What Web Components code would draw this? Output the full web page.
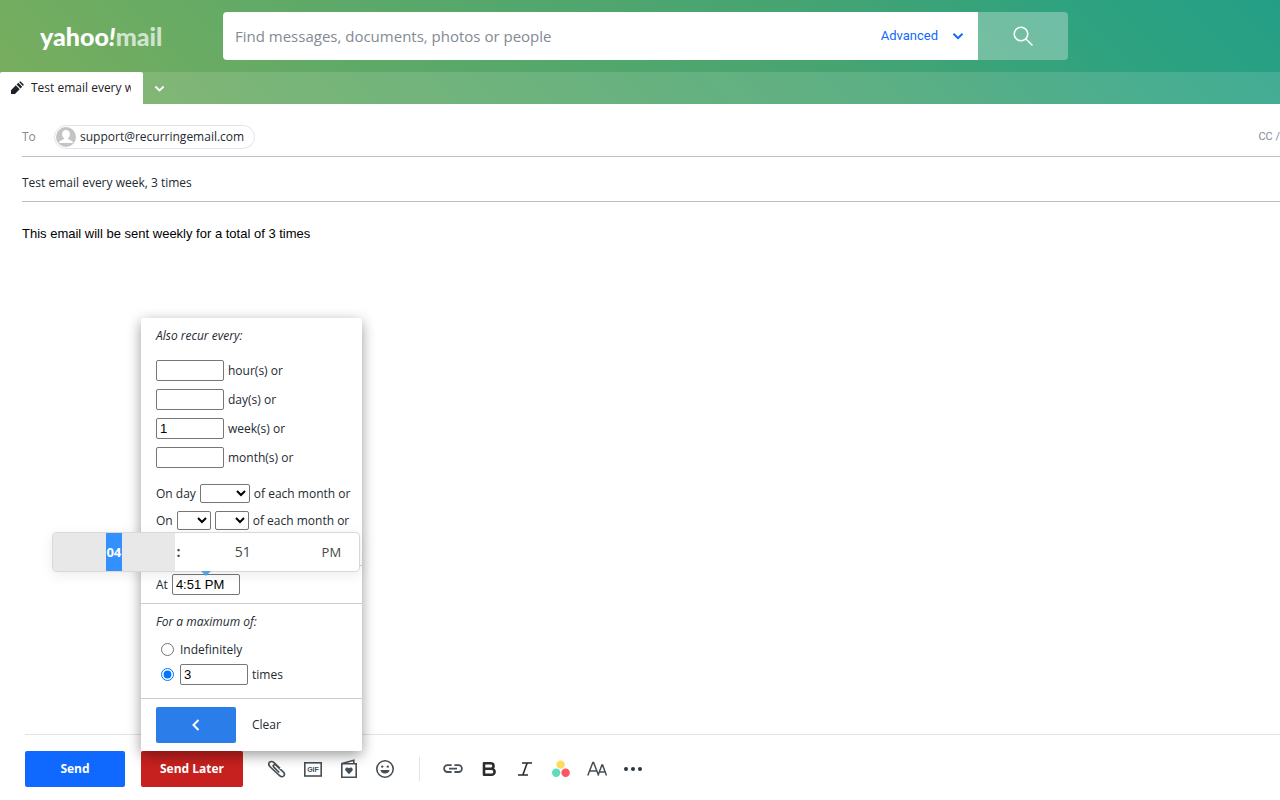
<!DOCTYPE html>
<html lang="en">
<head>
<meta charset="utf-8">
<title>Yahoo Mail</title>
<style>
  body {
    margin: 0;
    background: #fff;
    color: #232a31;
    font: 12px/20px "Open Sans", "Noto Sans", sans-serif;
  }
</style>
</head>
<body>
<mail-app></mail-app>

<script>
// ================================================
// Constants
// ================================================
const BASE_CSS = `
  *, *::before, *::after { box-sizing: border-box; }
  button, input, select { font: inherit; color: inherit; margin: 0; }
  button { border: 0; padding: 0; background: none; cursor: pointer; }
  a { color: inherit; text-decoration: none; }
  .field {
    height: 21px;
    width: 68px;
    padding: 0 3px;
    border: 1px solid #767676;
    border-radius: 2px;
    background: #fff;
    color: #000;
    font: 13px/16px "Liberation Sans", Arial, sans-serif;
  }
`;

// [viewBox, markup]
const ICONS = {
  pen: ['0 0 14 14', '<path fill="#1d2228" d="M1 13V9.200L5.800 4.300l3.900 3.900L5 13zM6.600 3.500L8.300 1.800l3.900 3.900-1.700 1.700zM9.100 1.100l.7-.7q.4-.4.8 0l3 3q.4.400 0 .8l-.7.7z"/>'],
  down: ['0 0 12 12', '<path fill="none" stroke="currentColor" stroke-width="2" d="M1.500 3.800L6 8.200l4.500-4.400"/>'],
  back: ['0 0 12 12', '<path fill="none" stroke="currentColor" stroke-width="2" d="M8.500 1L3.500 6l5 5"/>'],
  search: ['0 0 20 20', '<g fill="none" stroke="currentColor" stroke-width="1.600" stroke-linecap="round"><circle cx="8" cy="8" r="6.800"/><path d="M13 13l6 6"/></g>'],
  avatar: ['0 0 20 20', '<circle cx="10" cy="10" r="10" fill="#c4c4c4"/><path fill="#fff" d="M10 3c2.600 0 3.900 1.700 3.900 4 0 2-.8 3.300-1.800 4.100v1c0 .8 4.700 1.100 4.900 4H3c.2-2.900 4.900-3.200 4.900-4v-1C6.900 10.300 6.100 9 6.100 7c0-2.300 1.300-4 3.900-4z"/>'],
  clip: ['0 0 20 20', '<path fill="none" stroke="#464e56" stroke-width="1.600" d="M12.300 13.500L6.800 8.200C5.300 6.800 7.200 4.600 8.900 6.100l7.300 6.800c3 2.900-.5 6.700-3.600 3.800L3.300 8C-.2 4.600 3.300.5 7 3.700l6 5.700"/>'],
  gif: ['0 0 20 20', '<rect x="1.800" y="3.800" width="16.400" height="13.200" fill="none" stroke="#464e56" stroke-width="1.600"/><text x="10" y="13" text-anchor="middle" font-family="Liberation Sans, Arial, sans-serif" font-weight="700" font-size="7" fill="#464e56">GIF</text>'],
  card: ['0 0 20 20', '<path fill="none" stroke="#464e56" stroke-width="1.600" d="M2.800 4.800h14.400v13.400H2.800zM3 4.500L14.800 1.200v3.300"/><path fill="#464e56" d="M10 15.200L6.700 11.800C5 9.900 7.900 6.900 10 9.300c2.100-2.400 5 .6 3.300 2.500z"/>'],
  smile: ['0 0 20 20', '<circle cx="10" cy="10" r="8.200" fill="none" stroke="#464e56" stroke-width="1.600"/><circle cx="7.200" cy="7.600" r="1.200" fill="#464e56"/><circle cx="12.800" cy="7.600" r="1.200" fill="#464e56"/><path fill="#464e56" d="M5.500 11h9c-.4 4.800-8.600 4.800-9 0z"/>'],
  link: ['0 0 20 20', '<path fill="none" stroke="#464e56" stroke-width="1.800" d="M8.600 13H4.500a3.400 3.400 0 010-6.800h4.100M11.400 6.200h4.100a3.400 3.400 0 010 6.800h-4.100M6 9.600h8"/>'],
  bold: ['0 0 20 20', '<path fill="none" stroke="#2c2c2c" stroke-width="2.600" stroke-linejoin="round" d="M5 4.200h6.700a2.700 2.700 0 010 5.600H5zM5 9.800h7.600a3 3 0 010 6H5z"/>'],
  italic: ['0 0 20 20', '<path fill="none" stroke="#2c2c2c" stroke-width="1.600" d="M7 4h10M3 16h10M12.200 4L7.800 16"/>'],
  colors: ['0 0 20 20', '<circle cx="9.600" cy="5.600" r="4.200" fill="#ffdb5c"/><circle cx="5.200" cy="13.800" r="4.200" fill="#5edcc0"/><circle cx="14.600" cy="13.800" r="4.200" fill="#ff5561"/>'],
  font: ['0 0 20 20', '<path fill="none" stroke="#464e56" stroke-width="1.500" d="M.8 16.500L5.800 3.500h.8l5 13M2.600 12h7.200M11 16.500L14.900 6h.7l3.900 10.500M12.500 13h5.500"/>'],
  more: ['0 0 20 20', '<g fill="#2c363f"><circle cx="3" cy="10" r="2"/><circle cx="10" cy="10" r="2"/><circle cx="17" cy="10" r="2"/></g>'],
};


function define(name, css, html) {
  customElements.define(name, class extends HTMLElement {
    constructor() {
      super();
      this.attachShadow({ mode: 'open' }).innerHTML = `<style>${BASE_CSS}${css}</style>${html}`;
    }
  });
}


// ================================================
// Icon
// ================================================
class MailIcon extends HTMLElement {
  constructor() {
    super();
    this.attachShadow({ mode: 'open' });
  }

  connectedCallback() {
    const [viewBox, markup] = ICONS[this.getAttribute('name')];
    const size = this.getAttribute('size') || 20;
    this.shadowRoot.innerHTML = `
      <style>:host { display: inline-flex; flex: none; } svg { display: block; }</style>
      <svg width="${size}" height="${size}" viewBox="${viewBox}" aria-hidden="true">${markup}</svg>`;
  }
}
customElements.define('mail-icon', MailIcon);


// ================================================
// Header
// ================================================
define('mail-search', `
  :host { display: block; flex: 0 1 845px; }
  form { display: flex; height: 48px; border-radius: 4px; overflow: hidden; }
  input {
    flex: 1;
    min-width: 0;
    padding: 0 12px;
    border: 0;
    background: #fff;
    font-size: 15px;
    outline: 0;
  }
  input::placeholder { color: #828a93; opacity: 1; }
  .advanced {
    display: flex;
    align-items: center;
    gap: 14px;
    padding-right: 14px;
    background: #fff;
    color: #0f69ff;
    font: 13px/20px Roboto, sans-serif;
  }
  .go {
    display: grid;
    place-items: center;
    width: 90px;
    background: rgba(255, 255, 255, .3);
    color: #fff;
  }
`, `
  <form>
    <input type="text" aria-label="Search" placeholder="Find messages, documents, photos or people">
    <button class="advanced" type="button">Advanced <mail-icon name="down" size="12"></mail-icon></button>
    <button class="go" type="button" aria-label="Search mail"><mail-icon name="search"></mail-icon></button>
  </form>
`);

define('mail-header', `
  :host {
    display: block;
    background: linear-gradient(45deg, #7aae5d 0%, #5ea968 30%, #45a472 65%, #2ea280 85%, #249f86 100%);
  }
  .top { display: flex; align-items: center; padding: 12px 40px; }
  .logo {
    flex: 0 0 183px;
    color: #fff;
    font: 900 25px/32px Lato, sans-serif;
  }
  .logo i { font-style: italic; }
  .logo span { color: rgba(255, 255, 255, .7); }
  .tabs { display: flex; height: 32px; background: rgba(255, 255, 255, .13); }
  .tab {
    display: flex;
    align-items: center;
    gap: 7px;
    width: 143px;
    padding: 0 12px 0 10px;
    background: #fff;
    border-radius: 2px 2px 0 0;
    color: #1d2228;
  }
  .tab span { overflow: hidden; white-space: nowrap; }
  .list { display: grid; place-items: center; width: 32px; color: #fff; }
`, `
  <div class="top">
    <a class="logo" href="#">yahoo<i>!</i><span>mail</span></a>
    <mail-search></mail-search>
  </div>
  <nav class="tabs">
    <a class="tab" href="#"><mail-icon name="pen" size="14"></mail-icon><span>Test email every week, 3 times</span></a>
    <button class="list" aria-label="Tab list"><mail-icon name="down" size="11"></mail-icon></button>
  </nav>
`);


// ================================================
// Message fields
// ================================================
define('mail-message', `
  :host { display: block; flex: 1; padding-left: 22px; }
  .to {
    display: flex;
    align-items: center;
    height: 53px;
    padding-top: 14px;
    padding-bottom: 0;
    border-bottom: 1px solid #b9bdc5;
    color: #828a93;
  }
  .to label { width: 32px; }
  .chip {
    display: flex;
    align-items: center;
    gap: 4px;
    height: 24px;
    padding: 0 10px 0 1px;
    border: 1px solid #e0e4e9;
    border-radius: 12px;
    color: #232a31;
    font-size: 12px;
  }
  .cc { margin-left: auto; font: 11px/20px Roboto, sans-serif; }
  input {
    display: block;
    width: 100%;
    border: 0;
    padding: 0;
    outline: 0;
    background: none;
  }
  .subject { height: 45px; padding-top: 6px; border-bottom: 1px solid #b9bdc5; }
  .body {
    padding: 22px 0;
    color: #000;
    font: 13px/20px "Liberation Sans", Arial, sans-serif;
  }
  .to { padding: 13px 0 0; align-items: flex-start; height: 53px; }
  .to > * { margin-top: 8px; }
  .to > a { line-height: 24px; }
  .to label { line-height: 24px; }
`, `
  <div class="to">
    <label id="to">To</label>
    <div class="chip" aria-labelledby="to"><mail-icon name="avatar"></mail-icon>support@recurringemail.com</div>
    <a class="cc" href="#">CC /</a>
  </div>
  <input class="subject" aria-label="Subject" value="Test email every week, 3 times">
  <div class="body">This email will be sent weekly for a total of 3 times</div>
`);


// ================================================
// Recurrence menu
// ================================================
define('time-picker', `
  :host {
    display: flex;
    width: 308px;
    height: 40px;
    border: 1px solid #d9d9d9;
    border-radius: 4px;
    background: #fff;
    box-shadow: 0 3px 13px rgba(0, 0, 0, .08);
    color: #484848;
    font-size: 14px;
  }
  :host::after {
    content: "";
    position: absolute;
    top: 100%;
    left: 50%;
    border: 5px solid transparent;
    border-top-color: #4ba3f0;
    border-bottom: 0;
    transform: translateX(-50%);
  }
  input {
    flex: 1;
    min-width: 0;
    padding: 0;
    border: 0;
    outline: 0;
    background: none;
    text-align: center;
    color: #484848;
  }
  .hour {
    background: linear-gradient(#3390ff, #3390ff) center / 16px 100% no-repeat #e8e8e8;
    border-radius: 3px 0 0 3px;
    color: #fff;
    font-weight: 700;
    font-size: 13px;
  }
  .sep { width: 7px; text-align: center; font-weight: 700; line-height: 38px; }
  .ampm { width: 55px; font-size: 13px; }
`, `
  <input class="hour" aria-label="Hour" value="04">
  <span class="sep">:</span>
  <input aria-label="Minute" value="51">
  <button class="ampm">PM</button>
`);

define('recur-menu', `
  :host {
    display: block;
    width: 221px;
    background: #fff;
    border-radius: 2px;
    box-shadow: 0 4px 14px rgba(0, 0, 0, .4);
    white-space: nowrap;
  }
  section { padding: 8px 15px; border-bottom: 1px solid #ccc; }
  section:last-child { border-bottom: 0; }
  h2 { margin: 0; font: italic 12px/20px "Open Sans", "Noto Sans", sans-serif; }
  .row { display: flex; align-items: center; gap: 4px; }
  .counts { display: grid; gap: 8px; padding: 14px 0 16px; }
  .days { display: grid; gap: 8px; padding-bottom: 27px; }
  .days .row { height: 19px; }
  select {
    width: 34px;
    height: 19px;
    border: 1px solid #767676;
    border-radius: 2px;
    background: #fff;
    color: #000;
  }
  .day { width: 50px; }
  .time { position: relative; display: flex; }
  time-picker {
    position: absolute;
    bottom: calc(100% + 2px);
    left: 50%;
    transform: translateX(-50%);
  }
  .limits { display: grid; gap: 4px; padding: 7px 0 5px 5px; }
  .limits .row { height: 21px; }
  .limits input[type="radio"] { width: 13px; height: 13px; margin-right: 2px; }
  .back {
    display: grid;
    place-items: center;
    width: 80px;
    height: 36px;
    margin-right: 12px;
    border-radius: 2px;
    background: #2b7de9;
    color: #fff;
  }
`, `
  <section>
    <h2>Also recur every:</h2>
    <div class="counts">
      <div class="row"><input class="field" id="hours"><label for="hours">hour(s) or</label></div>
      <div class="row"><input class="field" id="days"><label for="days">day(s) or</label></div>
      <div class="row"><input class="field" id="weeks" value="1"><label for="weeks">week(s) or</label></div>
      <div class="row"><input class="field" id="months"><label for="months">month(s) or</label></div>
    </div>
    <div class="days">
      <div class="row"><label for="day">On day</label><select class="day" id="day"><option></option></select>of each month or</div>
      <div class="row"><label for="nth">On</label><select id="nth"><option></option></select><select aria-label="Weekday"><option></option></select>of each month or</div>
    </div>
  </section>
  <section>
    <div class="row">
      <label for="at">At</label>
      <div class="time"><input class="field" id="at" value="4:51 PM"><time-picker></time-picker></div>
    </div>
  </section>
  <section>
    <h2>For a maximum of:</h2>
    <div class="limits">
      <div class="row"><input type="radio" name="max" id="forever"><label for="forever">Indefinitely</label></div>
      <div class="row"><input type="radio" name="max" aria-label="Limited" checked><input class="field" id="times" value="3"><label for="times">times</label></div>
    </div>
  </section>
  <section class="row">
    <button class="back" aria-label="Back"><mail-icon name="back" size="12"></mail-icon></button>
    <button>Clear</button>
  </section>
`);


// ================================================
// Compose toolbar
// ================================================
define('compose-toolbar', `
  :host {
    display: flex;
    align-items: center;
    gap: 16px;
    margin-left: 25px;
    padding: 16px 0 13px;
    border-top: 1px solid #e0e4e9;
  }
  .send, .later {
    width: 100px;
    height: 36px;
    border-radius: 2px;
    background: #0f69ff;
    color: #fff;
    font-weight: 700;
  }
  .later { width: 102px; background: #c6211f; }
  .anchor { position: relative; display: flex; }
  recur-menu { position: absolute; bottom: 100%; left: 0; }
  .tools { display: flex; align-items: center; gap: 16px; padding-left: 8px; }
  .tools button { display: flex; }
  .rule { width: 1px; height: 24px; margin: 0 7px 0 8px; background: #e0e4e9; }
`, `
  <button class="send">Send</button>
  <div class="anchor">
    <button class="later">Send Later</button>
    <recur-menu></recur-menu>
  </div>
  <div class="tools">
    <button aria-label="Attach"><mail-icon name="clip"></mail-icon></button>
    <button aria-label="Insert GIF"><mail-icon name="gif"></mail-icon></button>
    <button aria-label="Insert card"><mail-icon name="card"></mail-icon></button>
    <button aria-label="Emoji"><mail-icon name="smile"></mail-icon></button>
    <span class="rule"></span>
    <button aria-label="Link"><mail-icon name="link"></mail-icon></button>
    <button aria-label="Bold"><mail-icon name="bold"></mail-icon></button>
    <button aria-label="Italic"><mail-icon name="italic"></mail-icon></button>
    <button aria-label="Text colour"><mail-icon name="colors"></mail-icon></button>
    <button aria-label="Font"><mail-icon name="font"></mail-icon></button>
    <button aria-label="More"><mail-icon name="more"></mail-icon></button>
  </div>
`);


// ================================================
// App
// ================================================
define('mail-app', `
  :host { display: flex; flex-direction: column; min-height: 100vh; }
`, `
  <mail-header></mail-header>
  <mail-message></mail-message>
  <compose-toolbar></compose-toolbar>
`);
</script>
</body>
</html>
